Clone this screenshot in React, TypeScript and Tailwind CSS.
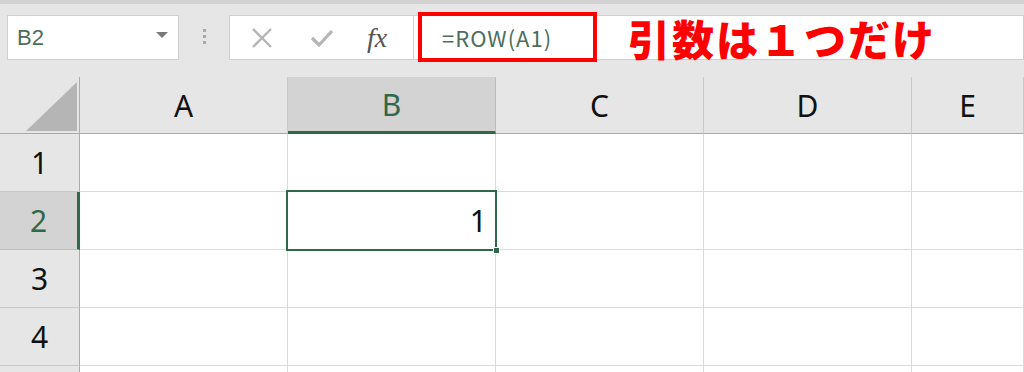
import React from 'react';

const cols = ['A', 'B', 'C', 'D', 'E'];
const rows = [1, 2, 3, 4, 5];

const XIcon = () => (
  <svg width="22" height="22" viewBox="0 0 22 22">
    <path d="M2 2 L20 20 M20 2 L2 20" stroke="#b5b5b5" strokeWidth="2.4" fill="none" />
  </svg>
);

const CheckIcon = () => (
  <svg width="24" height="20" viewBox="0 0 24 20">
    <path d="M2 10 L9 17 L22 3" stroke="#b5b5b5" strokeWidth="3.2" fill="none" />
  </svg>
);

export default function App() {
  return (
    <div className="w-[1024px] h-[372px] overflow-hidden bg-[#e6e6e6] font-['Noto_Sans',sans-serif]">
      <div className="h-[4px] bg-[#d2d2d2]" />
      {/* formula bar */}
      <div className="flex items-start h-[73px] pt-[9px]">
        <div className="ml-[7px] mt-[2px] w-[172px] h-[45px] bg-white border border-[#cfcfcf] flex items-center justify-between pl-[9px] pr-[10px]">
          <span className="text-[22px] text-[#4e6e5c] font-['Liberation_Sans',sans-serif]">B2</span>
          <span className="w-0 h-0 border-l-[6px] border-r-[6px] border-t-[6px] border-l-transparent border-r-transparent border-t-[#7a7a7a] mb-[6px]" />
        </div>
        <div className="w-[50px] h-[47px] flex flex-col items-center justify-center gap-[3px]">
          <span className="w-[3px] h-[3px] bg-[#a8a8a8]" />
          <span className="w-[3px] h-[3px] bg-[#a8a8a8]" />
          <span className="w-[3px] h-[3px] bg-[#a8a8a8]" />
        </div>
        <div className="mt-[2px] w-[185px] h-[45px] bg-white border border-[#cfcfcf] flex items-center">
          <span className="w-[64px] flex justify-center"><XIcon /></span>
          <span className="w-[56px] flex justify-center"><CheckIcon /></span>
          <span className="w-[54px] flex justify-center text-[28px] italic text-[#555] font-['Liberation_Serif',serif] leading-none">fx</span>
        </div>
        <div className="mt-[2px] flex-1 h-[45px] bg-white border border-[#cfcfcf] border-l-0 flex items-center relative">
          <div className="absolute left-[4px] top-[-4px] w-[179px] h-[50px] border-[4px] border-[#ff0000]" />
          <span className="ml-[28px] w-[158px] text-[22px] text-[#4e6e5c] font-['Noto_Sans_CJK_JP',sans-serif] tracking-[1px]">=ROW(A1)</span>
          <span className="ml-[28px] text-[42px] font-black text-[#ff0000] tracking-[2px] leading-none font-['Noto_Sans_CJK_JP',sans-serif]">引数は１つだけ</span>
        </div>
      </div>
      {/* grid */}
      <div className="grid grid-cols-[80px_208px_208px_208px_208px_112px] grid-rows-[57px_58px_58px_58px_58px_58px]">
        <div className="relative border-r border-b border-[#ababab] bg-[#e6e6e6]">
          <svg className="absolute left-[26px] top-[5px]" width="51" height="49" viewBox="0 0 51 49">
            <path d="M51 0 L51 49 L0 49 Z" fill="#b5b5b5" />
          </svg>
        </div>
        {cols.map((c) => (
          <div
            key={c}
            className={
              c === 'B'
                ? 'flex items-center justify-center bg-[#d3d3d3] border-r border-[#bcbcbc] border-b-[3px] border-b-[#30694a] text-[30px] text-[#30694a]'
                : 'flex items-center justify-center bg-[#e6e6e6] border-r border-[#c9c9c9] border-b border-b-[#ababab] text-[30px] text-[#111]'
            }
          >
            {c}
          </div>
        ))}
        {rows.map((r) => (
          <React.Fragment key={r}>
            <div
              className={
                r === 2
                  ? 'flex items-center justify-center bg-[#d3d3d3] border-r-[3px] border-r-[#30694a] border-b border-b-[#bcbcbc] text-[30px] text-[#30694a]'
                  : 'flex items-center justify-center bg-[#e6e6e6] border-r border-r-[#ababab] border-b border-b-[#c9c9c9] text-[30px] text-[#111]'
              }
            >
              {r < 5 ? r : ''}
            </div>
            {cols.map((c) => (
              <div key={c} className="relative bg-white border-r border-b border-[#dadada]">
                {r === 2 && c === 'B' && (
                  <div className="absolute z-10 left-[-2px] top-[-2px] w-[211px] h-[61px] border-[2px] border-[#30694a] flex items-center justify-end pr-[8px] text-[30px] text-[#111]">
                    1
                    <span className="absolute right-[-5px] bottom-[-5px] w-[7px] h-[7px] bg-[#30694a] border border-white" />
                  </div>
                )}
              </div>
            ))}
          </React.Fragment>
        ))}
      </div>
    </div>
  );
}
